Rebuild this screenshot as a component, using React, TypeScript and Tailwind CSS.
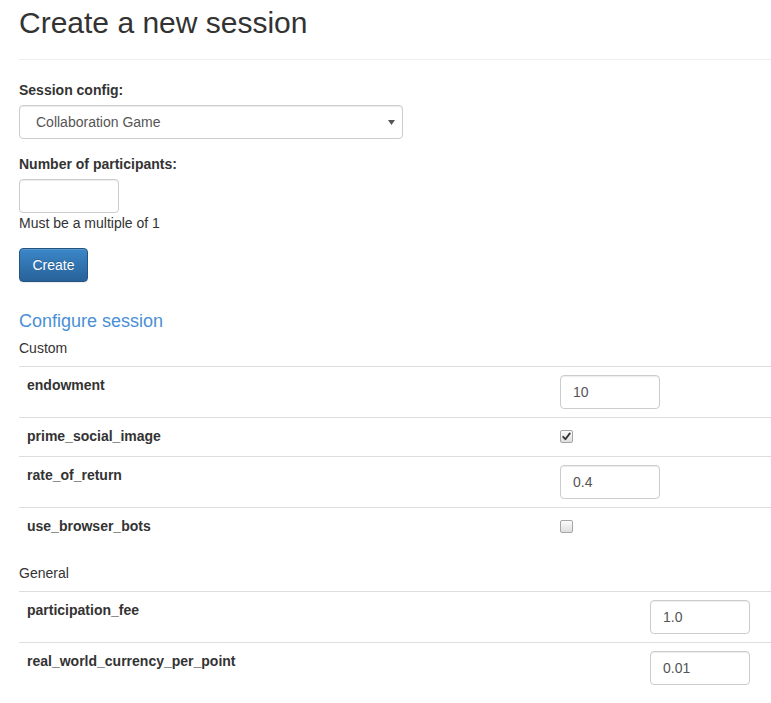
import React from "react";

const font = { fontFamily: '"Liberation Sans", Arial, Helvetica, sans-serif' };

function TextInput({ value }: { value?: string }) {
  return (
    <input
      readOnly
      defaultValue={value ?? ""}
      className="block h-[34px] w-[100px] rounded-[4px] border border-[#ccc] bg-white px-[12px] text-[14px] leading-[20px] text-[#555] shadow-[inset_0_1px_1px_rgba(0,0,0,0.075)] outline-none"
      style={font}
    />
  );
}

function Checkbox({ checked }: { checked?: boolean }) {
  return (
    <span className="flex h-[13px] w-[13px] items-center justify-center rounded-[2px] border border-[#a6a6a6] bg-gradient-to-b from-[#fcfcfc] to-[#dedede]">
      {checked && (
        <svg width="9" height="9" viewBox="0 0 9 9">
          <path d="M1.2 4.8 L3.4 7.2 L7.8 1.4" fill="none" stroke="#333" strokeWidth="1.8" strokeLinecap="round" strokeLinejoin="round" />
        </svg>
      )}
    </span>
  );
}

type Row = { name: string; kind: "input" | "check"; value?: string; checked?: boolean };

function ConfigTable({ caption, rows, col1, className }: { caption: string; rows: Row[]; col1: string; className?: string }) {
  return (
    <div className={className}>
      <div className="py-[8px] text-[14px] leading-[20px] text-[#333]">{caption}</div>
      {rows.map((r) => (
        <div key={r.name} className={`grid ${col1} border-t border-[#ddd]`}>
          <div className="p-[8px] text-[14px] font-bold leading-[20px] text-[#333]">{r.name}</div>
          <div className="p-[8px]">
            {r.kind === "input" ? (
              <TextInput value={r.value} />
            ) : (
              <div className="h-[22px] pt-[4px]">
                <Checkbox checked={r.checked} />
              </div>
            )}
          </div>
        </div>
      ))}
    </div>
  );
}

export default function App() {
  return (
    <div className="min-h-[703px] w-[771px] overflow-hidden bg-white pl-[19px] text-[14px] leading-[20px] text-[#333]" style={font}>
      <div className="border-b border-[#eee] pt-[6px] pb-[20px]">
        <h1 className="text-[30px] font-normal leading-[33px] text-[#333]">Create a new session</h1>
      </div>

      <div className="pt-[20px]">
        <label className="mb-[5px] block font-bold">Session config:</label>
        <div className="relative flex h-[34px] w-[384px] items-center rounded-[4px] border border-[#ccc] bg-white pl-[16px] text-[#555] shadow-[inset_0_1px_1px_rgba(0,0,0,0.075)]">
          <span>Collaboration Game</span>
          <svg className="absolute right-[7px] top-[14px]" width="7" height="5" viewBox="0 0 7 5">
            <path d="M0 0 L7 0 L3.5 5 Z" fill="#555" />
          </svg>
        </div>
      </div>

      <div className="pt-[15px]">
        <label className="mb-[5px] block font-bold">Number of participants:</label>
        <TextInput />
        <div>Must be a multiple of 1</div>
      </div>

      <button
        className="mt-[15px] h-[34px] w-[69px] rounded-[4px] border border-[#245580] bg-gradient-to-b from-[#3b87c8] to-[#28629a] text-[14px] text-white shadow-[inset_0_1px_0_rgba(255,255,255,0.15),0_1px_1px_rgba(0,0,0,0.075)] [text-shadow:0_-1px_0_rgba(0,0,0,0.2)]"
        style={font}
      >
        Create
      </button>

      <h4 className="mt-[30px] text-[18px] font-normal leading-[18px] text-[#4a8fd6]">Configure session</h4>

      <ConfigTable
        caption="Custom"
        col1="grid-cols-[533px_1fr]"
        className="mb-[9px]"
        rows={[
          { name: "endowment", kind: "input", value: "10" },
          { name: "prime_social_image", kind: "check", checked: true },
          { name: "rate_of_return", kind: "input", value: "0.4" },
          { name: "use_browser_bots", kind: "check", checked: false },
        ]}
      />

      <ConfigTable
        caption="General"
        col1="grid-cols-[623px_1fr]"
        rows={[
          { name: "participation_fee", kind: "input", value: "1.0" },
          { name: "real_world_currency_per_point", kind: "input", value: "0.01" },
        ]}
      />
    </div>
  );
}
